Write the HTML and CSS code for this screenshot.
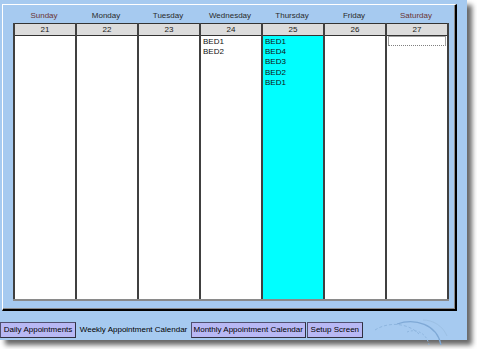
FILE: index.html
```html
<!DOCTYPE html>
<html>
<head>
<meta charset="utf-8">
<link rel="stylesheet" href="styles.css">
</head>
<body>
<div class="window">
  <div class="panel">
    <div class="days">
      <div class="dayname weekend">Sunday</div>
      <div class="dayname">Monday</div>
      <div class="dayname">Tuesday</div>
      <div class="dayname">Wednesday</div>
      <div class="dayname">Thursday</div>
      <div class="dayname">Friday</div>
      <div class="dayname weekend">Saturday</div>
    </div>
    <div class="grid">
      <div class="col"><div class="date">21</div><div class="cell"></div></div>
      <div class="col"><div class="date">22</div><div class="cell"></div></div>
      <div class="col"><div class="date">23</div><div class="cell"></div></div>
      <div class="col"><div class="date">24</div><div class="cell"><div class="item">BED1</div><div class="item">BED2</div></div></div>
      <div class="col"><div class="date">25</div><div class="cell today"><div class="item">BED1</div><div class="item">BED4</div><div class="item">BED3</div><div class="item">BED2</div><div class="item">BED1</div></div></div>
      <div class="col"><div class="date">26</div><div class="cell"></div></div>
      <div class="col last"><div class="date">27</div><div class="cell"><div class="editbox"></div></div></div>
    </div>
  </div>
  <div class="tabstrip">
    <div class="tab w-daily">Daily Appointments</div>
    <div class="tab active w-weekly">Weekly Appointment Calendar</div>
    <div class="tab w-monthly">Monthly Appointment Calendar</div>
    <div class="tab w-setup">Setup Screen</div>
    <div class="swirl">
      <svg width="100" height="29" viewBox="0 0 100 29">
        <path d="M8 14 C20 6 40 6 52 18" fill="none" stroke="#8eb6df" stroke-width="1" stroke-dasharray="3 2"/>
        <path d="M30 8 C48 2 70 8 74 29" fill="none" stroke="#7fa9d6" stroke-width="1.2"/>
        <path d="M40 16 C50 12 60 18 62 29" fill="none" stroke="#8eb6df" stroke-width="1" stroke-dasharray="2 2"/>
        <path d="M56 4 C66 4 76 10 80 20" fill="none" stroke="#9cc0e4" stroke-width="1"/>
      </svg>
    </div>
  </div>
</div>
</body>
</html>
```

FILE: styles.css
```css
html, body {
  margin: 0;
  padding: 0;
  background: #ffffff;
}
body {
  width: 477px;
  height: 349px;
  overflow: hidden;
  font-family: "Liberation Sans", Arial, sans-serif;
  font-size: 8px;
  color: #000;
}
.window {
  width: 467px;
  height: 340px;
  background: #a6caf0;
  box-shadow: 5px 5px 5px rgba(0, 0, 0, 0.6);
  padding-top: 4px;
  box-sizing: border-box;
  display: flex;
  flex-direction: column;
}
.panel {
  margin-left: 2px;
  width: 455px;
  height: 307px;
  box-sizing: border-box;
  border-top: 1px solid #ffffff;
  border-left: 1px solid #ffffff;
  border-right: 2px solid #000000;
  border-bottom: 2px solid #000000;
  box-shadow: inset -1px -1px 0 #8a8a8a;
  padding: 0 6px 0 10px;
  display: flex;
  flex-direction: column;
}
.days {
  display: flex;
  height: 18px;
  padding-top: 6px;
  box-sizing: border-box;
}
.dayname {
  width: 62px;
  text-align: center;
  line-height: 10px;
  color: #2a2a2a;
}
.dayname.weekend {
  color: #6a3434;
}
.grid {
  display: flex;
  width: 436px;
  height: 278px;
  border-bottom: 2px solid #8a8a8a;
  box-sizing: border-box;
}
.col {
  width: 62px;
  border-left: 2px solid #404040;
  box-sizing: border-box;
  display: flex;
  flex-direction: column;
}
.col.last {
  width: 64px;
  border-right: 2px solid #404040;
}
.date {
  height: 13px;
  box-sizing: border-box;
  border-top: 1px solid #333333;
  border-bottom: 1px solid #333333;
  background: #dcdcdc;
  text-align: center;
  line-height: 11px;
  color: #1a1a1a;
}
.cell {
  flex: 1;
  background: #ffffff;
  padding: 1px 0 0 2px;
}
.cell.today {
  background: #00ffff;
}
.item {
  line-height: 10.2px;
  height: 10.2px;
  color: #111111;
}
.editbox {
  margin-left: -1px;
  margin-right: 1px;
  height: 8px;
  margin-top: -1px;
  border: 1px solid #a0a0a0;
  border-bottom: 1px dotted #808080;
  background: #ffffff;
}
.tabstrip {
  display: flex;
  margin-top: 11px;
  height: 16px;
  align-items: stretch;
}
.tab {
  box-sizing: border-box;
  height: 16px;
  line-height: 14px;
  text-align: center;
  white-space: nowrap;
  background: #b8b8f4;
  border: 1px solid #505070;
  border-right-color: #303040;
  border-bottom-color: #303040;
}
.tab.active {
  background: transparent;
  border-color: transparent;
}
.w-daily { width: 77px; }
.w-weekly { width: 116px; }
.w-monthly { width: 116px; }
.w-setup { width: 57px; margin-left: 1px; }
.swirl {
  margin-top: -6px;
  margin-left: 4px;
  height: 29px;
}
.swirl svg { display: block; }
```
